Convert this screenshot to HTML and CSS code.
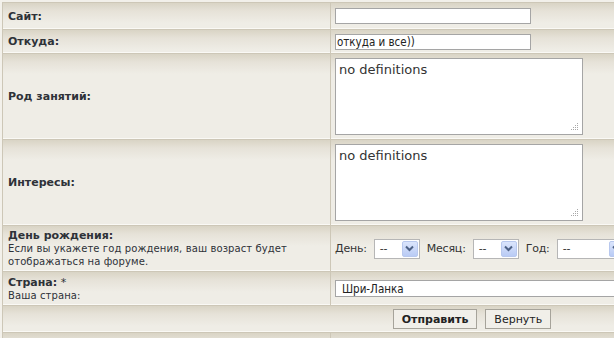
FILE: index.html
```html
<!DOCTYPE html>
<html lang="ru">
<head>
<meta charset="utf-8">
<title>Профиль</title>
<link rel="stylesheet" href="styles.css">
</head>
<body>
<div class="page">
  <div class="prev"></div>
  <table class="form">
    <tr class="r-site">
      <td class="label"><b>Сайт:</b></td>
      <td class="field"><input class="text" type="text" value=""></td>
    </tr>
    <tr class="r-from">
      <td class="label"><b>Откуда:</b></td>
      <td class="field"><input class="text" type="text" value="откуда и все))"></td>
    </tr>
    <tr class="r-area">
      <td class="label"><b>Род занятий:</b></td>
      <td class="field"><div class="area-wrap"><textarea class="area">no definitions</textarea><span class="grip"><svg width="9" height="9" viewBox="0 0 9 9"><g fill="#a8a8a8"><rect x="7" y="1" width="1" height="1"/><rect x="5" y="3" width="1" height="1"/><rect x="7" y="3" width="1" height="1"/><rect x="3" y="5" width="1" height="1"/><rect x="5" y="5" width="1" height="1"/><rect x="7" y="5" width="1" height="1"/><rect x="1" y="7" width="1" height="1"/><rect x="3" y="7" width="1" height="1"/><rect x="5" y="7" width="1" height="1"/><rect x="7" y="7" width="1" height="1"/></g></svg></span></div></td>
    </tr>
    <tr class="r-area">
      <td class="label"><b>Интересы:</b></td>
      <td class="field"><div class="area-wrap"><textarea class="area">no definitions</textarea><span class="grip"><svg width="9" height="9" viewBox="0 0 9 9"><g fill="#a8a8a8"><rect x="7" y="1" width="1" height="1"/><rect x="5" y="3" width="1" height="1"/><rect x="7" y="3" width="1" height="1"/><rect x="3" y="5" width="1" height="1"/><rect x="5" y="5" width="1" height="1"/><rect x="7" y="5" width="1" height="1"/><rect x="1" y="7" width="1" height="1"/><rect x="3" y="7" width="1" height="1"/><rect x="5" y="7" width="1" height="1"/><rect x="7" y="7" width="1" height="1"/></g></svg></span></div></td>
    </tr>
    <tr class="r-bday">
      <td class="label"><b>День рождения:</b><span class="desc">Если вы укажете год рождения, ваш возраст будет отображаться на форуме.</span></td>
      <td class="field">
        <div class="dates">
          <span class="dlabel">День:</span>
          <span class="sel w-day"><span class="val">--</span><span class="arr"><svg width="9" height="7" viewBox="0 0 9 7"><path d="M1 1.5 L4.5 5 L8 1.5" fill="none" stroke="#4d6185" stroke-width="2"/></svg></span></span>
          <span class="dlabel">Месяц:</span>
          <span class="sel w-day"><span class="val">--</span><span class="arr"><svg width="9" height="7" viewBox="0 0 9 7"><path d="M1 1.5 L4.5 5 L8 1.5" fill="none" stroke="#4d6185" stroke-width="2"/></svg></span></span>
          <span class="dlabel">Год:</span>
          <span class="sel w-year"><span class="val">--</span><span class="arr"><svg width="9" height="7" viewBox="0 0 9 7"><path d="M1 1.5 L4.5 5 L8 1.5" fill="none" stroke="#4d6185" stroke-width="2"/></svg></span></span>
        </div>
      </td>
    </tr>
    <tr class="r-country">
      <td class="label"><b>Страна:</b> *<span class="desc">Ваша страна:</span></td>
      <td class="field"><input class="text wide" type="text" value="Шри-Ланка"></td>
    </tr>
    <tr class="r-btn">
      <td class="buttons" colspan="2"><button class="btn primary" type="button">Отправить</button><button class="btn" type="button">Вернуть</button></td>
    </tr>
    <tr class="r-tail">
      <td class="label"></td>
      <td class="field"></td>
    </tr>
  </table>
</div>
</body>
</html>
```
FILE: styles.css
```css
html, body {
  margin: 0;
  padding: 0;
  overflow: hidden;
  background: #f3f1eb;
}
.page {
  width: 614px;
  height: 338px;
  overflow: hidden;
  padding-left: 2px;
  box-sizing: border-box;
}
.prev {
  height: 2px;
  background: #f2f0ea;
  width: 940px;
}
.form {
  width: 940px;
  border-collapse: separate;
  border-spacing: 1px;
  background: #cdc7b7;
  table-layout: fixed;
  font-family: "DejaVu Sans", Verdana, sans-serif;
  color: #2e3238;
}
.form td {
  padding: 0;
  vertical-align: middle;
  background: linear-gradient(to bottom, #d9d4c5 0, #e6e2d8 8px, #efede6 20px, #efede6 calc(100% - 1px), #faf9f5 calc(100% - 1px));
}
.form td.label {
  width: 322px;
  padding: 0 0 0 5px;
  font-size: 11px;
  line-height: 13px;
}
.form td.field {
  padding: 0 0 0 4px;
}
.label b {
  font-weight: bold;
}
.desc {
  display: block;
  font-size: 10px;
  line-height: 13px;
  font-weight: normal;
  letter-spacing: 0.1px;
}
.r-site td { height: 26px; }
.r-from td { height: 23px; }
.r-area td { height: 85px; }
.r-bday td { height: 45px; }
.r-country td { height: 33px; }
.r-btn td { height: 26px; }
.r-tail td { height: 10px; }

.text {
  display: block;
  box-sizing: border-box;
  width: 196px;
  height: 16px;
  margin: 0;
  border: 1px solid #a5a5a5;
  padding: 0 1px;
  background: #fff;
  font-family: "DejaVu Sans Condensed", "DejaVu Sans", Verdana, sans-serif;
  font-stretch: condensed;
  font-size: 11.5px;
  color: #222;
  outline: none;
}
.text.wide {
  width: 420px;
  height: 17px;
  padding: 0 6px;
}
.area-wrap {
  position: relative;
  width: 248px;
  height: 77px;
}
.area {
  display: block;
  box-sizing: border-box;
  width: 248px;
  height: 77px;
  margin: 0;
  border: 1px solid #a5a5a5;
  padding: 3px 3px;
  resize: none;
  background: #fff;
  font-family: "DejaVu Sans", Verdana, sans-serif;
  font-size: 13px;
  line-height: 15px;
  color: #333;
  outline: none;
}
.grip {
  position: absolute;
  right: 4px;
  bottom: 4px;
  width: 9px;
  height: 9px;
  line-height: 0;
}
.dates {
  display: flex;
  align-items: center;
  font-size: 11px;
  letter-spacing: -0.2px;
}
.dlabel {
  margin-right: 7px;
  color: #333;
}
.sel {
  display: inline-flex;
  align-items: center;
  justify-content: space-between;
  box-sizing: border-box;
  height: 20px;
  border: 1px solid #b6b6b6;
  background: #fff;
  padding: 0 1px 0 5px;
  margin-right: 7px;
  color: #333;
}
.w-day { width: 46px; }
.w-year { width: 70px; }
.val {
  font-size: 11px;
}
.arr {
  box-sizing: border-box;
  width: 16px;
  height: 16px;
  border: 1px solid #b8c8ee;
  border-radius: 2px;
  background: linear-gradient(to bottom, #dbe5fc, #b9cbf5);
  display: flex;
  align-items: center;
  justify-content: center;
}
.form td.buttons {
  padding: 0;
  text-align: center;
}
.btn {
  height: 20px;
  margin: 0 4px;
  border: 1px solid #a6a39a;
  background: #f1efe9;
  font-family: "DejaVu Sans", Verdana, sans-serif;
  font-size: 11px;
  color: #222;
  padding: 0 8px;
  vertical-align: middle;
}
.btn.primary {
  font-weight: bold;
}
```
